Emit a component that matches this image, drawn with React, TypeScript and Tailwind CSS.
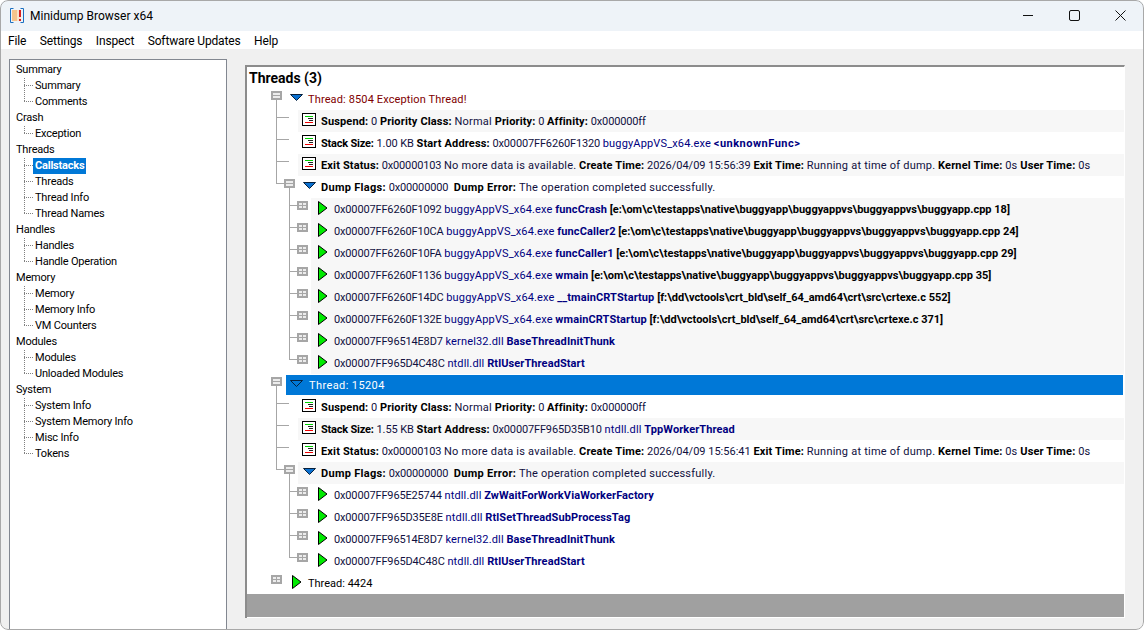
const sideTree = [
  { name: 'Summary', items: ['Summary', 'Comments'] },
  { name: 'Crash', items: ['Exception'] },
  { name: 'Threads', items: ['Callstacks', 'Threads', 'Thread Info', 'Thread Names'] },
  { name: 'Handles', items: ['Handles', 'Handle Operation'] },
  { name: 'Memory', items: ['Memory', 'Memory Info', 'VM Counters'] },
  { name: 'Modules', items: ['Modules', 'Unloaded Modules'] },
  { name: 'System', items: ['System Info', 'System Memory Info', 'Misc Info', 'Tokens'] },
]

const menus = ['File', 'Settings', 'Inspect', 'Software Updates', 'Help']

const LINE = '#a6a6a6'

function Toggle({ x, y, open }: { x: number; y: number; open: boolean }) {
  return (
    <g>
      <rect x={x} y={y} width={11} height={9} fill="#a6a6a6" />
      <rect x={x + 2} y={y + 2} width={7} height={5} fill="#ececec" />
      <rect x={x + 2} y={y + 4} width={7} height={1} fill="#a6a6a6" />
      {!open && <rect x={x + 5} y={y + 2} width={1} height={5} fill="#a6a6a6" />}
    </g>
  )
}

// row gutter: connector lines and the toggle box
function Gutter({ level, last, toggle, open, width }: { level: number; last?: boolean; toggle?: boolean; open?: boolean; width: number }) {
  return (
    <svg width={width} height={22} className="shrink-0">
      {level === 0 && <Toggle x={24} y={3} open={!!open} />}
      {level === 0 && open && <rect x={29} y={12} width={1} height={10} fill={LINE} />}
      {level === 1 && (
        <>
          <rect x={29} y={0} width={1} height={last ? 8 : 22} fill={LINE} />
          <rect x={29} y={7} width={toggle ? 8 : 13} height={1} fill={LINE} />
          {toggle && <Toggle x={37} y={3} open />}
          {toggle && <rect x={42} y={12} width={1} height={10} fill={LINE} />}
        </>
      )}
      {level === 2 && (
        <>
          <rect x={42} y={0} width={1} height={last ? 8 : 22} fill={LINE} />
          <rect x={42} y={7} width={8} height={1} fill={LINE} />
          <Toggle x={50} y={3} open={false} />
        </>
      )}
    </svg>
  )
}

function ArrowDown({ inverted }: { inverted?: boolean }) {
  return (
    <svg width={13} height={7} className="shrink-0 mb-[3px]">
      <path d="M0.5 0.5 H12.5 L6.5 6.5 Z" fill={inverted ? '#0078d7' : '#0a70d0'} stroke="#06203c" strokeWidth="1" />
    </svg>
  )
}

function ArrowRight() {
  return (
    <svg width={10} height={14} className="shrink-0 mb-[3px]">
      <path d="M0.5 0.5 L9 7 L0.5 13.5 Z" fill="#00ea00" stroke="#000" strokeWidth="1" />
    </svg>
  )
}

function InfoIcon() {
  return (
    <svg width={14} height={13} className="shrink-0 mb-[4px]">
      <rect x={0.5} y={0.5} width={13} height={12} fill="#fff" stroke="#000" />
      <rect x={3} y={3} width={8} height={1} fill="#00d000" />
      <rect x={6} y={5} width={5} height={1} fill="#222" />
      <rect x={7} y={7} width={4} height={1} fill="#222" />
      <rect x={3} y={9} width={8} height={1} fill="#f00000" />
    </svg>
  )
}

function K({ children }: { children: React.ReactNode }) {
  return <b className="font-bold tracking-[0.15px] text-black">{children}</b>
}

function V({ children }: { children: React.ReactNode }) {
  return <span className="tracking-[0.22px] text-[#101040]">{children}</span>
}

function Hex({ children }: { children: React.ReactNode }) {
  return <span className="tracking-[-0.15px] text-[#101040]">{children}</span>
}

function N({ children }: { children: React.ReactNode }) {
  return <span className="tracking-[0.15px] text-[#000080]">{children}</span>
}

function F({ children }: { children: React.ReactNode }) {
  return <b className="font-bold tracking-[0.1px] text-[#000080]">{children}</b>
}

function InfoRow({ striped, children }: { striped?: boolean; children: React.ReactNode }) {
  return (
    <div className="flex h-[22px]">
      <Gutter level={1} width={51} />
      <div className={`flex min-w-0 flex-1 items-center gap-[5px] pl-[4px] whitespace-pre ${striped ? 'bg-[#f7f7f7]' : ''}`}>
        <InfoIcon />
        <span className="pt-[2px]">{children}</span>
      </div>
    </div>
  )
}

function StackSize({ children }: { children: React.ReactNode }) {
  return (
    <>
      <b className="font-bold tracking-[-0.2px] text-black">Stack Size:</b> <span className="tracking-[-0.1px] text-[#101040]">{children}</span>
    </>
  )
}

function DumpRow({ striped }: { striped?: boolean }) {
  return (
    <div className="flex h-[22px]">
      <Gutter level={1} toggle last width={51} />
      <div className={`flex min-w-0 flex-1 items-center gap-[5px] pl-[5px] whitespace-pre ${striped ? 'bg-[#f7f7f7]' : ''}`}>
        <ArrowDown />
        <span className="pt-[2px]">
          <b className="font-bold tracking-[0.3px]">Dump Flags:</b> <Hex>0x00000000</Hex>  <b className="font-bold tracking-[0.3px]">Dump Error:</b> <V>The operation completed successfully.</V>
        </span>
      </div>
    </div>
  )
}

function FrameRow({ last, striped, addr, mod, fn, src }: { last?: boolean; striped?: boolean; addr: string; mod: string; fn: string; src?: string }) {
  return (
    <div className="flex h-[22px]">
      <Gutter level={2} last={last} width={64} />
      <div className={`flex min-w-0 flex-1 items-center gap-[6px] pl-[7px] whitespace-pre ${striped ? 'bg-[#f7f7f7]' : ''}`}>
        <ArrowRight />
        <span className="pt-[2px]">
          <Hex>{addr}</Hex> <N>{mod}</N> <F>{fn}</F>
          {src && <b className="font-bold text-black"> {src}</b>}
        </span>
      </div>
    </div>
  )
}

export default function App() {
  return (
    <div className="relative flex h-[630px] w-[1144px] flex-col overflow-hidden rounded-[8px] bg-[#f0f0f0] text-[12px] leading-[16px] text-black [font-family:Roboto,sans-serif]">
      {/* title bar */}
      <div className="flex h-[31px] shrink-0 items-center bg-[#eef3f8]">
        <svg width={14} height={15} className="ml-[10px] shrink-0">
          <rect x={2} y={2} width={5} height={11} fill="#f5c48c" />
          <rect x={7} y={2} width={4} height={11} fill="#f8e4cc" />
          <path d="M3.5 0.5 H0.5 V14.5 H3.5 M10.5 0.5 H13.5 V14.5 H10.5" stroke="#1a6fc0" fill="none" />
          <rect x={9} y={2} width={2} height={7} fill="#d82020" />
          <rect x={9} y={11} width={2} height={2} fill="#d82020" />
        </svg>
        <span className="ml-[6px]">Minidump Browser x64</span>
        <div className="ml-auto flex items-center">
          <div className="flex w-[46px] justify-center">
            <svg width={11} height={11}>
              <rect x={0} y={5} width={10} height={1} fill="#111" />
            </svg>
          </div>
          <div className="flex w-[46px] justify-center">
            <svg width={11} height={11}>
              <rect x={0.5} y={0.5} width={10} height={10} rx={1.5} fill="none" stroke="#111" />
            </svg>
          </div>
          <div className="flex w-[46px] justify-center">
            <svg width={11} height={11}>
              <path d="M0.5 0.5 L10.5 10.5 M10.5 0.5 L0.5 10.5" stroke="#111" fill="none" />
            </svg>
          </div>
          <div className="w-px" />
        </div>
      </div>

      {/* menu bar */}
      <div className="flex h-[18px] shrink-0 items-center gap-[13.5px] bg-white pl-[8px] pt-[2px] tracking-[-0.15px]">
        {menus.map((m) => (
          <span key={m}>{m}</span>
        ))}
      </div>

      <div className="flex min-h-0 flex-1 pl-[9px] pt-[10px]">
        {/* left tree */}
        <div className="h-[571px] w-[218px] shrink-0 border border-[#828790] bg-white pl-[6px] pt-[2px] text-[11px] tracking-[-0.2px]">
          {sideTree.map((group) => (
            <div key={group.name}>
              <div className="h-[16px]">{group.name}</div>
              {group.items.map((item, i) => (
                <div key={item} className="flex h-[16px] items-center">
                  <svg width={18} height={16} className="shrink-0">
                    <line x1={8.5} y1={0} x2={8.5} y2={i === group.items.length - 1 ? 8 : 16} stroke="#808080" strokeDasharray="1 1" />
                    <line x1={8} y1={7.5} x2={17} y2={7.5} stroke="#808080" strokeDasharray="1 1" />
                  </svg>
                  <span className={item === 'Callstacks' ? '-ml-px bg-[#0078d7] px-[2px] font-bold text-white' : 'px-px'}>{item}</span>
                </div>
              ))}
            </div>
          ))}
        </div>

        {/* right panel */}
        <div className="ml-[18px] mt-[6px] flex h-[553px] w-[880px] shrink-0 flex-col overflow-hidden border-2 border-r border-b-0 border-[#8c8c8c] border-r-white bg-white text-[11px]">
          <div className="h-[21px] shrink-0 pl-[2px] pt-[2px] text-[14px] font-bold leading-[18px]">Threads (3)</div>

          <div className="flex h-[22px]">
            <Gutter level={0} open width={39} />
            <div className="flex flex-1 items-center gap-[5px] pl-[4px] tracking-[0.13px] text-[#800000]">
              <ArrowDown />
              <span className="pt-[2px]">Thread: 8504 Exception Thread!</span>
            </div>
          </div>
          <InfoRow striped>
            <K>Suspend:</K> <Hex>0</Hex> <K>Priority Class:</K> <V>Normal</V> <K>Priority:</K> <Hex>0</Hex> <K>Affinity:</K> <Hex>0x000000ff</Hex>
          </InfoRow>
          <InfoRow>
            <StackSize>1.00 KB</StackSize> <K>Start Address:</K> <Hex>0x00007FF6260F1320</Hex> <N>buggyAppVS_x64.exe</N> <b className="font-bold tracking-[0.5px] text-[#000080]">&lt;unknownFunc&gt;</b>
          </InfoRow>
          <InfoRow striped>
            <K>Exit Status:</K> <Hex>0x00000103</Hex> <V>No more data is available.</V> <K>Create Time:</K> <span className="text-[#101040]">2026/04/09 15:56:39</span> <K>Exit Time:</K> <V>Running at time of dump.</V> <K>Kernel Time:</K> <V>0s</V> <K>User Time:</K> <V>0s</V>
          </InfoRow>
          <DumpRow />
          <FrameRow striped addr="0x00007FF6260F1092" mod="buggyAppVS_x64.exe" fn="funcCrash" src="[e:\om\c\testapps\native\buggyapp\buggyappvs\buggyappvs\buggyapp.cpp 18]" />
          <FrameRow striped addr="0x00007FF6260F10CA" mod="buggyAppVS_x64.exe" fn="funcCaller2" src="[e:\om\c\testapps\native\buggyapp\buggyappvs\buggyappvs\buggyapp.cpp 24]" />
          <FrameRow striped addr="0x00007FF6260F10FA" mod="buggyAppVS_x64.exe" fn="funcCaller1" src="[e:\om\c\testapps\native\buggyapp\buggyappvs\buggyappvs\buggyapp.cpp 29]" />
          <FrameRow striped addr="0x00007FF6260F1136" mod="buggyAppVS_x64.exe" fn="wmain" src="[e:\om\c\testapps\native\buggyapp\buggyappvs\buggyappvs\buggyapp.cpp 35]" />
          <FrameRow striped addr="0x00007FF6260F14DC" mod="buggyAppVS_x64.exe" fn="__tmainCRTStartup" src="[f:\dd\vctools\crt_bld\self_64_amd64\crt\src\crtexe.c 552]" />
          <FrameRow striped addr="0x00007FF6260F132E" mod="buggyAppVS_x64.exe" fn="wmainCRTStartup" src="[f:\dd\vctools\crt_bld\self_64_amd64\crt\src\crtexe.c 371]" />
          <FrameRow striped addr="0x00007FF96514E8D7" mod="kernel32.dll" fn="BaseThreadInitThunk" />
          <FrameRow striped last addr="0x00007FF965D4C48C" mod="ntdll.dll" fn="RtlUserThreadStart" />

          <div className="flex h-[22px]">
            <Gutter level={0} open width={39} />
            <div className="my-px mr-px flex flex-1 items-center gap-[6px] bg-[#0078d7] pl-[4px] tracking-[0.4px] text-white">
              <ArrowDown inverted />
              <span className="pt-[2px]">Thread: 15204</span>
            </div>
          </div>
          <InfoRow>
            <K>Suspend:</K> <Hex>0</Hex> <K>Priority Class:</K> <V>Normal</V> <K>Priority:</K> <Hex>0</Hex> <K>Affinity:</K> <Hex>0x000000ff</Hex>
          </InfoRow>
          <InfoRow striped>
            <StackSize>1.55 KB</StackSize> <K>Start Address:</K> <Hex>0x00007FF965D35B10</Hex> <N>ntdll.dll</N> <F>TppWorkerThread</F>
          </InfoRow>
          <InfoRow>
            <K>Exit Status:</K> <Hex>0x00000103</Hex> <V>No more data is available.</V> <K>Create Time:</K> <span className="text-[#101040]">2026/04/09 15:56:41</span> <K>Exit Time:</K> <V>Running at time of dump.</V> <K>Kernel Time:</K> <V>0s</V> <K>User Time:</K> <V>0s</V>
          </InfoRow>
          <DumpRow striped />
          <FrameRow addr="0x00007FF965E25744" mod="ntdll.dll" fn="ZwWaitForWorkViaWorkerFactory" />
          <FrameRow addr="0x00007FF965D35E8E" mod="ntdll.dll" fn="RtlSetThreadSubProcessTag" />
          <FrameRow addr="0x00007FF96514E8D7" mod="kernel32.dll" fn="BaseThreadInitThunk" />
          <FrameRow last addr="0x00007FF965D4C48C" mod="ntdll.dll" fn="RtlUserThreadStart" />

          <div className="flex h-[22px]">
            <Gutter level={0} width={39} />
            <div className="flex flex-1 items-center gap-[6px] pl-[6px]">
              <ArrowRight />
              <span className="pt-[2px]">Thread: 4424</span>
            </div>
          </div>
          <div className="flex-1 border-b border-white bg-[#a0a0a0]" />
        </div>
      </div>

      {/* window outline */}
      <div className="pointer-events-none absolute inset-0 rounded-[8px] border border-[#a8a8a8]" />
    </div>
  )
}
